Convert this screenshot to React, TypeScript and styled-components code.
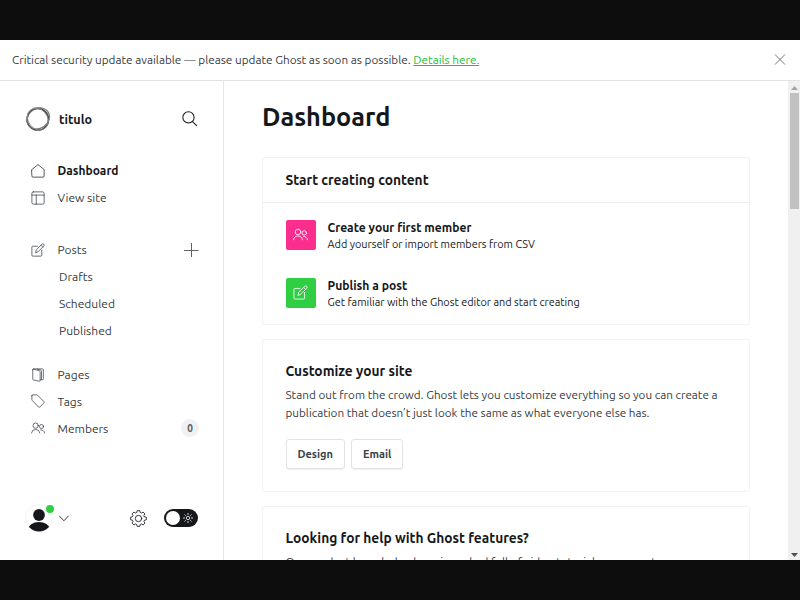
import React from 'react';
import styled, { createGlobalStyle } from 'styled-components';

const GlobalStyle = createGlobalStyle`
  * { box-sizing: border-box; }
  body {
    margin: 0;
    background: #0d0d0d;
    font-family: Ubuntu, "Noto Sans", sans-serif;
    color: #15171a;
  }
  h1, h2, h3, p { margin: 0; }
`;

const Screen = styled.div`
  width: 800px;
  height: 600px;
  padding: 40px 0;
  overflow: hidden;
`;

const Window = styled.div`
  display: flex;
  flex-direction: column;
  height: 520px;
  overflow: hidden;
  background: #fff;
`;

const Banner = styled.header`
  display: flex;
  flex: none;
  align-items: center;
  justify-content: space-between;
  height: 41px;
  padding: 0 14px 1px 12px;
  border-bottom: 1px solid #e1e3e5;
  font-size: 11.73px;
  color: #343a41;
  white-space: nowrap;
`;

const BannerLink = styled.a`
  color: #26bd38;
  text-decoration: underline;
`;

const Body = styled.div`
  display: flex;
  flex: 1;
  min-height: 0;
`;

const Sidebar = styled.aside`
  display: flex;
  flex: none;
  flex-direction: column;
  width: 224px;
  padding: 22px 24px 26px;
  border-right: 1px solid #e5e7e9;
`;

const SiteRow = styled.div`
  display: flex;
  align-items: center;
  height: 32px;
  padding: 0 2px 0 1px;
`;

const SiteName = styled.span`
  flex: 1;
  margin-left: 8px;
  font-size: 12.6px;
  font-weight: 700;
`;

const NavGroup = styled.nav<{ $gap: number }>`
  margin-top: ${(p) => p.$gap}px;
`;

const NavItem = styled.div<{ $active?: boolean }>`
  display: flex;
  align-items: center;
  height: 26.8px;
  padding-left: 6.5px;
  font-size: 12px;
  font-weight: ${(p) => (p.$active ? 700 : 400)};
  color: ${(p) => (p.$active ? '#15171a' : '#343a41')};

  svg { flex: none; }
`;

const NavLabel = styled.span`
  flex: 1;
  margin-left: 13px;
`;

const SubItem = styled(NavItem)`
  padding-left: 35px;
`;

const Count = styled.span`
  display: grid;
  place-items: center;
  width: 18px;
  height: 18px;
  border-radius: 9px;
  background: #f0f1f3;
  font-size: 10px;
  font-weight: 600;
  color: #50565c;
`;

const Footer = styled.div`
  display: flex;
  align-items: center;
  height: 32px;
  margin-top: auto;
  padding: 0 1px;
`;

const Avatar = styled.div`
  position: relative;
  width: 28px;
  height: 28px;
  margin-right: 5px;

  svg { display: block; }
`;

const StatusDot = styled.span`
  position: absolute;
  top: 1px;
  right: -1px;
  width: 8px;
  height: 8px;
  border-radius: 50%;
  background: #30cf43;
`;

const FooterSpace = styled.div`
  flex: 1;
`;

const Toggle = styled.div`
  display: flex;
  align-items: center;
  justify-content: space-between;
  width: 34px;
  height: 18px;
  margin-left: 17px;
  padding: 0 5px 0 1.5px;
  border-radius: 9px;
  background: #15171a;
`;

const Knob = styled.span`
  width: 14.5px;
  height: 14.5px;
  border-radius: 50%;
  background: #fff;
`;

const Main = styled.main`
  display: flex;
  flex: 1;
  flex-direction: column;
  min-width: 0;
  gap: 14.5px;
  padding: 17px 38px 0;
  overflow: hidden;
`;

const Title = styled.h1`
  flex: none;
  height: 44.5px;
  font-size: 25.3px;
  font-weight: 700;
  line-height: 37px;
`;

const Card = styled.section`
  flex: none;
  border: 1px solid #f1f2f3;
  border-radius: 3px;
  box-shadow: 0 0 1px rgba(0, 0, 0, 0.03);
`;

const CardHead = styled.div`
  height: 45px;
  padding: 0 22.5px;
  border-bottom: 1px solid #eaeced;
`;

const CardBody = styled.div<{ $height: number }>`
  height: ${(p) => p.$height}px;
  padding: 20px 22.5px 0;
`;

const CardTitle = styled.h2<{ $line: number }>`
  font-size: 13.75px;
  font-weight: 600;
  line-height: ${(p) => p.$line}px;
`;

const Text = styled.p`
  margin-top: 4px;
  font-size: 11.69px;
  line-height: 18.4px;
  color: #343a41;
  white-space: nowrap;
`;

const Steps = styled.div`
  display: flex;
  flex-direction: column;
  gap: 26px;
  height: 120.5px;
  padding: 16.5px 22.5px 0;
`;

const Step = styled.div`
  display: flex;
  gap: 11.5px;
`;

const StepIcon = styled.div<{ $color: string }>`
  display: grid;
  place-items: center;
  width: 30.5px;
  height: 30.5px;
  border-radius: 2px;
  background: ${(p) => p.$color};
  color: #fff;
`;

const StepTitle = styled.h3`
  font-size: 12.13px;
  font-weight: 600;
  line-height: 16.2px;
`;

const StepText = styled.p`
  font-size: 10.88px;
  line-height: 16px;
`;

const Buttons = styled.div`
  display: flex;
  gap: 6px;
  margin-top: 16.2px;
`;

const Button = styled.button`
  height: 29.5px;
  padding: 0 11px;
  border: 1px solid #e1e3e6;
  border-radius: 3px;
  background: #fff;
  box-shadow: 0 1px 1px rgba(0, 0, 0, 0.06);
  font: 600 11px Ubuntu, "Noto Sans", sans-serif;
  color: #394047;
`;

const Scrollbar = styled.div`
  display: flex;
  flex: none;
  flex-direction: column;
  align-items: center;
  width: 12px;
  padding: 4.5px 0 3.5px;
  background: #f0f0f0;
`;

const Thumb = styled.div`
  width: 9px;
  height: 116px;
  margin: 3.5px 0 auto;
  background: #c1c1c1;
`;

type IconProps = { size?: number; width?: number };

function Icon({ size = 14, width = 1.25, children }: IconProps & { children: React.ReactNode }) {
  return (
    <svg width={size} height={size} viewBox="0 0 24 24" fill="none" stroke="currentColor"
      strokeWidth={width} strokeLinecap="round" strokeLinejoin="round">
      {children}
    </svg>
  );
}

const HomeIcon = () => (
  <Icon><path d="M1.500 9.500 12 1l10.500 8.500V21a1.500 1.500 0 0 1-1.500 1.500H3A1.500 1.500 0 0 1 1.500 21z" /></Icon>
);
const LayoutIcon = () => (
  <Icon><rect x="1.500" y="1.500" width="21" height="21" rx="2.500" /><path d="M1.500 7h21M9 7v15.500" /></Icon>
);
const EditIcon = (p: IconProps) => (
  <Icon {...p}>
    <path d="M18.500 12v9a1.500 1.500 0 0 1-1.500 1.500H3A1.500 1.500 0 0 1 1.500 21V7A1.500 1.500 0 0 1 3 5.500h8" />
    <path d="m8 16 1.200-4.400L18.700 2a2.200 2.200 0 0 1 3.200 3.200l-9.600 9.600zM17 3.800l3.200 3.200" />
  </Icon>
);
const PagesIcon = () => (
  <Icon width={1.2}>
    <path d="M3 3v16a1.500 1.500 0 0 0 1.200 1.500l10 2.200c.8.200 1.500-.3 1.500-1.200V6.500A1.800 1.800 0 0 0 14.500 5L4.500 1.800C3.600 1.500 3 2.100 3 3z" />
    <path d="M4.300 1.500h15.200A1.700 1.700 0 0 1 21.200 3.200v15.300a1.700 1.700 0 0 1-1.700 1.700h-3.700M11 1.800l5.500 1.700a2 2 0 0 1 1.500 2v14" />
  </Icon>
);
const TagIcon = () => (
  <Icon><path d="M1.500 3v6.500c0 .7.300 1.300.8 1.800l10.700 11a1.500 1.500 0 0 0 2.200 0l7-7a1.500 1.500 0 0 0 0-2.200L11.500 2.300A2.600 2.600 0 0 0 9.700 1.500H3A1.500 1.500 0 0 0 1.500 3z" /></Icon>
);
const MembersIcon = (p: IconProps) => (
  <Icon {...p}>
    <circle cx="8" cy="8" r="4.500" /><path d="M.8 20.500a7.300 7.300 0 0 1 14.400 0" />
    <circle cx="18" cy="9.500" r="3.500" /><path d="M16.500 15.300a5.500 5.500 0 0 1 6.800 5.200" />
  </Icon>
);
const GearIcon = () => {
  const teeth = Array.from({ length: 8 }, (_, i) => {
    const at = (deg: number, r: number) => {
      const a = ((i * 45 + deg) * Math.PI) / 180;
      return `${(12 + r * Math.cos(a)).toFixed(2)} ${(12 + r * Math.sin(a)).toFixed(2)}`;
    };
    return `${i ? 'L' : 'M'}${at(-16, 8.8)}L${at(-10, 11.2)}L${at(10, 11.2)}L${at(16, 8.8)}`;
  }).join('');
  return <Icon size={17} width={1.2}><path d={`${teeth}Z`} /><circle cx="12" cy="12" r="4.500" /></Icon>;
};

function SiteLogo() {
  return (
    <svg width="26" height="26" viewBox="0 0 26 26" fill="none" stroke="#444">
      <circle cx="12.800" cy="13.300" r="10.800" strokeWidth="1.500" />
      <ellipse cx="13.500" cy="12.700" rx="11.900" ry="9.800" strokeWidth="1" stroke="#777" transform="rotate(-35 13 13)" />
      <ellipse cx="12.900" cy="13.200" rx="11.800" ry="9.600" strokeWidth=".9" stroke="#888" transform="rotate(50 13 13)" />
      <path d="M9 2.200C16 0 22.800 3 24.800 10.500" strokeWidth="1" stroke="#888" />
    </svg>
  );
}

function AvatarIcon() {
  return (
    <svg width="28" height="28" viewBox="0 0 28 28">
      <defs><clipPath id="face"><circle cx="14" cy="14" r="13.400" /></clipPath></defs>
      <circle cx="14" cy="14" r="13.500" fill="#fff" stroke="#eceef0" strokeWidth=".8" />
      <g fill="#15171a" clipPath="url(#face)">
        <circle cx="14" cy="11" r="5.900" />
        <ellipse cx="14" cy="24.500" rx="10.500" ry="6.500" />
      </g>
    </svg>
  );
}

export default function App() {
  return (
    <>
      <GlobalStyle />
      <Screen>
        <Window>
          <Banner>
            <span>
              Critical security update available — please update Ghost as soon as possible.{' '}
              <BannerLink>Details here.</BannerLink>
            </span>
            <svg width="12" height="12" viewBox="0 0 12 12" stroke="#50565c" strokeWidth=".8">
              <path d="m1 .5 10 10M11 .5 1 10.500" />
            </svg>
          </Banner>
          <Body>
            <Sidebar>
              <SiteRow>
                <SiteLogo />
                <SiteName>titulo</SiteName>
                <Icon size={15.5} width={1.6}><circle cx="10" cy="10" r="8.700" /><path d="m16.300 16.300 6.400 6.400" /></Icon>
              </SiteRow>
              <NavGroup $gap={22.5}>
                <NavItem $active><HomeIcon /><NavLabel>Dashboard</NavLabel></NavItem>
                <NavItem><LayoutIcon /><NavLabel>View site</NavLabel></NavItem>
              </NavGroup>
              <NavGroup $gap={25.5}>
                <NavItem>
                  <EditIcon /><NavLabel>Posts</NavLabel>
                  <svg width="16" height="16" viewBox="0 0 16 16" stroke="#5d6369"><path d="M8.500 1v14M1 8.500h14.500" /></svg>
                </NavItem>
                <SubItem>Drafts</SubItem>
                <SubItem>Scheduled</SubItem>
                <SubItem>Published</SubItem>
              </NavGroup>
              <NavGroup $gap={17.5}>
                <NavItem><PagesIcon /><NavLabel>Pages</NavLabel></NavItem>
                <NavItem><TagIcon /><NavLabel>Tags</NavLabel></NavItem>
                <NavItem><MembersIcon /><NavLabel>Members</NavLabel><Count>0</Count></NavItem>
              </NavGroup>
              <Footer>
                <Avatar><AvatarIcon /><StatusDot /></Avatar>
                <svg width="12" height="8" viewBox="0 0 12 8" fill="none" stroke="#394047">
                  <path d="m1.200 1.800 4.700 5 4.700-5" />
                </svg>
                <FooterSpace />
                <GearIcon />
                <Toggle>
                  <Knob />
                  <svg width="10" height="10" viewBox="0 0 10 10" fill="none" stroke="#fff" strokeWidth=".8">
                    <circle cx="5" cy="5" r="1.700" />
                    <path d="M5 0v2M5 8v2M0 5h2M8 5h2M1.500 1.500l1.300 1.300M7.200 7.200l1.300 1.300M8.500 1.500 7.200 2.800M2.800 7.200 1.500 8.500" />
                  </svg>
                </Toggle>
              </Footer>
            </Sidebar>
            <Main>
              <Title>Dashboard</Title>
              <Card>
                <CardHead><CardTitle $line={44}>Start creating content</CardTitle></CardHead>
                <Steps>
                  <Step>
                    <StepIcon $color="#fb2d8d"><MembersIcon size={15} width={1.3} /></StepIcon>
                    <div>
                      <StepTitle>Create your first member</StepTitle>
                      <StepText>Add yourself or import members from CSV</StepText>
                    </div>
                  </Step>
                  <Step>
                    <StepIcon $color="#30cf43"><EditIcon size={15} width={1.3} /></StepIcon>
                    <div>
                      <StepTitle>Publish a post</StepTitle>
                      <StepText>Get familiar with the Ghost editor and start creating</StepText>
                    </div>
                  </Step>
                </Steps>
              </Card>
              <Card>
                <CardBody $height={150.5}>
                  <CardTitle $line={22}>Customize your site</CardTitle>
                  <Text>
                    Stand out from the crowd. Ghost lets you customize everything so you can create a<br />
                    publication that doesn’t just look the same as what everyone else has.
                  </Text>
                  <Buttons><Button>Design</Button><Button>Email</Button></Buttons>
                </CardBody>
              </Card>
              <Card>
                <CardBody $height={150.5}>
                  <CardTitle $line={22}>Looking for help with Ghost features?</CardTitle>
                  <Text>Our product knowledge base is packed full of video tutorials, answers to</Text>
                </CardBody>
              </Card>
            </Main>
            <Scrollbar>
              <svg width="7" height="4" viewBox="0 0 7 4" fill="#a3a3a3"><path d="M0 4 3.500 0 7 4z" /></svg>
              <Thumb />
              <svg width="7" height="4" viewBox="0 0 7 4" fill="#505050"><path d="M0 0h7L3.500 4z" /></svg>
            </Scrollbar>
          </Body>
        </Window>
      </Screen>
    </>
  );
}
